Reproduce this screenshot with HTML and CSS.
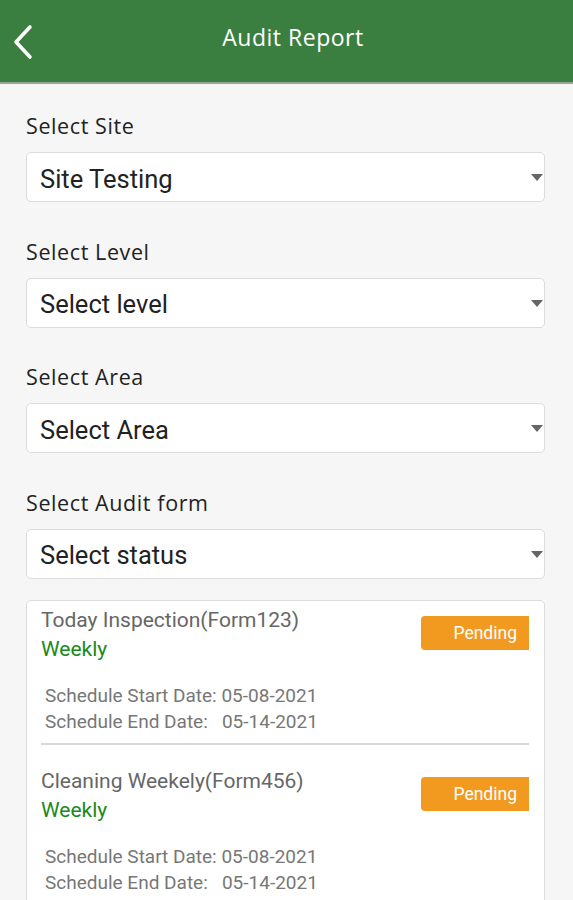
FILE: index.html
```html
<!DOCTYPE html>
<html lang="en">
<head>
  <meta charset="UTF-8" />
  <meta name="viewport" content="width=device-width, initial-scale=1.0"/>
  <title>Audit Report</title>
  <link rel="stylesheet" href="styles.css">
</head>
<body>
  <header class="topbar">
    <svg class="back" width="24" height="36" viewBox="0 0 24 36">
      <path d="M19 3 L5 18 L19 33" fill="none" stroke="#fff" stroke-width="3.6" stroke-linecap="round" stroke-linejoin="round"/>
    </svg>
    <h1>Audit Report</h1>
  </header>

  <main class="content">
    <div class="field">
      <label>Select Site</label>
      <div class="select">Site Testing<span class="caret"></span></div>
    </div>
    <div class="field">
      <label>Select Level</label>
      <div class="select">Select level<span class="caret"></span></div>
    </div>
    <div class="field">
      <label>Select Area</label>
      <div class="select">Select Area<span class="caret"></span></div>
    </div>
    <div class="field">
      <label>Select Audit form</label>
      <div class="select">Select status<span class="caret"></span></div>
    </div>

    <div class="card">
      <div class="item">
        <div class="item-head">
          <div>
            <div class="item-title">Today Inspection(Form123)</div>
            <div class="item-freq">Weekly</div>
          </div>
          <span class="badge">Pending</span>
        </div>
        <div class="dates">
          <div>Schedule Start Date: 05-08-2021</div>
          <div>Schedule End Date:&nbsp;&nbsp; 05-14-2021</div>
        </div>
      </div>
      <div class="item">
        <div class="item-head">
          <div>
            <div class="item-title">Cleaning Weekely(Form456)</div>
            <div class="item-freq">Weekly</div>
          </div>
          <span class="badge">Pending</span>
        </div>
        <div class="dates">
          <div>Schedule Start Date: 05-08-2021</div>
          <div>Schedule End Date:&nbsp;&nbsp; 05-14-2021</div>
        </div>
      </div>
    </div>
  </main>
</body>
</html>
```

FILE: styles.css
```css
* {
  box-sizing: border-box;
}
body {
  margin: 0;
  background: #f6f6f6;
  font-family: Roboto, 'Liberation Sans', sans-serif;
  height: 900px;
  overflow: hidden;
}
.topbar {
  height: 84px;
  background: #3a7f3f;
  border-bottom: 2px solid #9aa39a;
  display: flex;
  align-items: center;
  justify-content: center;
  padding-left: 13px;
  position: relative;
}
.topbar .back {
  position: absolute;
  left: 11px;
  top: 24px;
}
.topbar h1 {
  margin: 0 0 8px;
  color: #fff;
  font-family: 'Open Sans', sans-serif;
  font-weight: 500;
  font-size: 23px;
  letter-spacing: 0.5px;
}
.content {
  padding: 28px 28px 0 26px;
}
.field {
  margin-bottom: 35.5px;
}
.field label {
  display: block;
  font-family: 'Open Sans', sans-serif;
  font-size: 21.5px;
  letter-spacing: 0.6px;
  color: #222;
  line-height: 28px;
  margin-bottom: 12px;
}
.select {
  position: relative;
  height: 50px;
  background: #fff;
  border: 1px solid #dcdcdc;
  border-radius: 5px;
  padding: 3px 0 0 13px;
  display: flex;
  align-items: center;
  font-size: 25.5px;
  color: #222;
}
.caret {
  position: absolute;
  right: 1px;
  top: 21px;
  border-left: 6px solid transparent;
  border-right: 6px solid transparent;
  border-top: 7px solid #666;
}
.card {
  margin-top: -14px;
  background: #fff;
  border: 1px solid #dcdcdc;
  border-radius: 5px;
  padding: 0 15px 0 14px;
}
.item {
  padding: 5px 0 8px;
  border-bottom: 2px solid #d6d6d6;
}
.item + .item {
  padding-top: 22px;
  border-bottom: none;
}
.item-head {
  display: flex;
  justify-content: space-between;
  align-items: flex-start;
}
.item-title {
  font-size: 21px;
  color: #666;
  line-height: 28px;
}
.item-freq {
  font-size: 21px;
  color: #1a8a1a;
  line-height: 30px;
}
.badge {
  margin-top: 10px;
  width: 108px;
  height: 34px;
  background: #f29a1f;
  color: #fff;
  font-size: 17.5px;
  border-radius: 4px 0 0 4px;
  display: flex;
  align-items: center;
  justify-content: flex-end;
  padding-right: 12px;
}
.dates {
  margin-top: 19px;
  padding-left: 4px;
  font-size: 19px;
  color: #777;
  line-height: 26px;
}
```
